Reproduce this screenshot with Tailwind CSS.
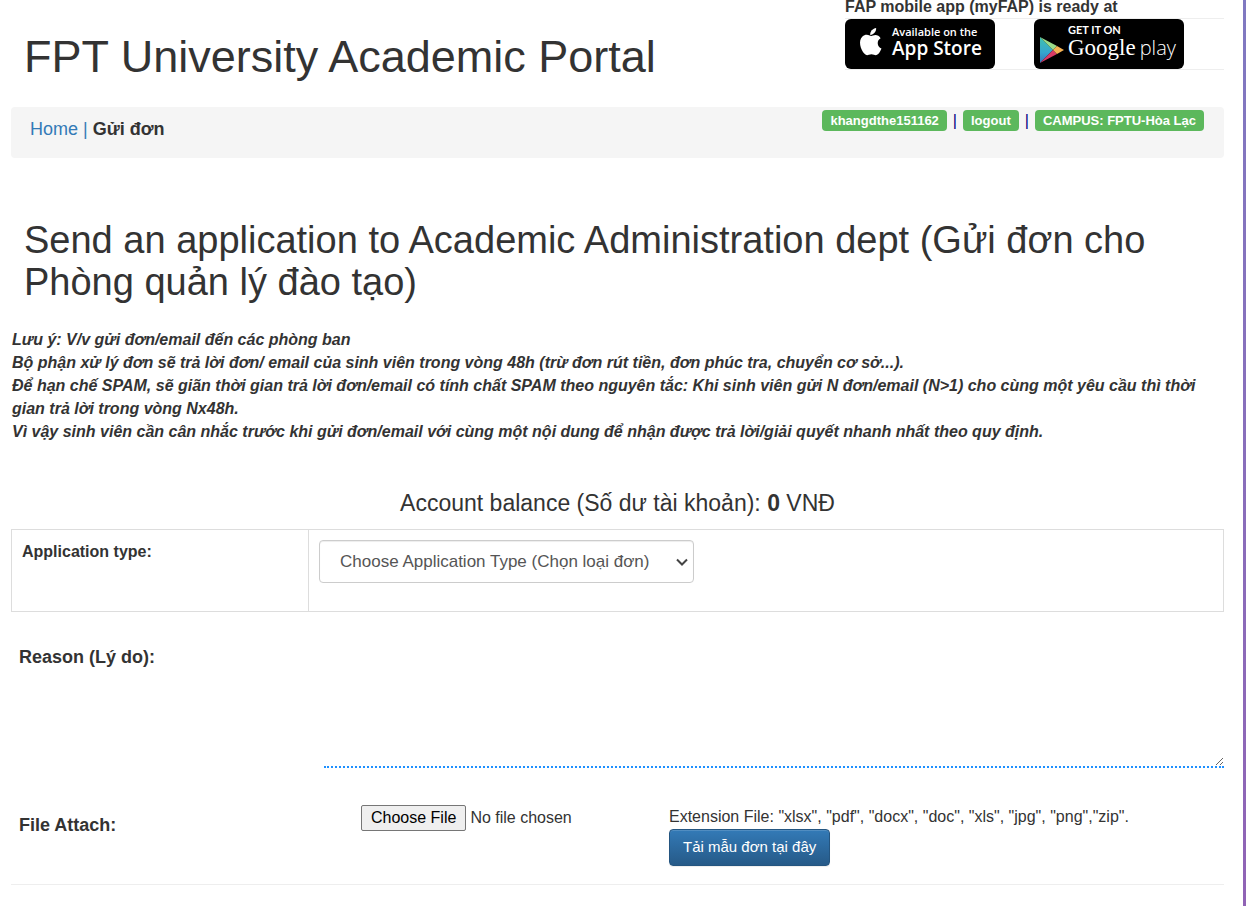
<!DOCTYPE html>
<html lang="vi">
<head>
<meta charset="utf-8">
<meta name="viewport" content="width=device-width, initial-scale=1">
<title>FPT University Academic Portal</title>
<script src="https://cdn.jsdelivr.net/npm/@tailwindcss/browser@4"></script>
</head>
<body class="flex min-h-screen overflow-x-hidden bg-white font-['Liberation_Sans',Arial,sans-serif] text-[16px] text-[#333]">
<div class="min-w-0 flex-1 pr-[19px] pl-[11px]">
  <header class="flex">
    <h1 class="min-w-0 flex-1 pt-8 pl-[13px] text-[45px] leading-[50px]">FPT University Academic Portal</h1>
    <div class="w-[379px] shrink-0">
      <p class="pb-1 leading-[14px] font-bold">FAP mobile app (myFAP) is ready at</p>
      <div class="grid grid-cols-[189px_1fr] border-y border-[#eee]">
        <a href="#" class="flex h-[50px] w-[150px] items-center gap-2 rounded-md bg-black pl-3 text-white">
          <svg class="mb-1 h-[30px] w-[27px] shrink-0" viewBox="0 0 27 32" fill="#fff" aria-hidden="true">
            <path d="M19.500 1c.2 2-.6 3.800-1.700 5.200-1.200 1.400-2.900 2.300-4.600 2.200-.2-1.900.7-3.700 1.700-4.900C16.100 2.100 18 1.100 19.500 1z"/>
            <path d="M24.300 12.100c-2 1.200-3.200 2.900-3.100 5.300 0 2.900 1.700 4.700 4 5.600-.8 2.300-2.100 4.400-3.500 5.900-1.300 1.300-2.800 1.500-4.500.7-1.900-.8-3.500-.8-5.400 0-1.900.9-3.300.5-4.700-1-4.500-4.900-6.900-14.200-2.200-18.500 2.300-2.100 5.200-2.200 7.700-1 1.300.6 2.200.6 3.500 0 3-1.200 6.200-.6 8.200 3z"/>
          </svg>
          <span class="flex flex-col pb-1 font-['Open_Sans',sans-serif] font-semibold">
            <span class="text-[11px] leading-3">Available on the</span>
            <span class="text-[19px] leading-5">App Store</span>
          </span>
        </a>
        <a href="#" class="flex h-[50px] w-[150px] items-center gap-1 rounded-md bg-black pl-1.5 text-white">
          <svg class="mt-3 h-[26px] w-6 shrink-0" viewBox="0 1 24 26" aria-hidden="true">
            <defs><linearGradient id="play" x1="0" y1="0" x2="0" y2="1"><stop stop-color="#3fc1ae"/><stop offset=".6" stop-color="#36a6cf"/><stop offset="1" stop-color="#3973b7"/></linearGradient></defs>
            <path fill="url(#play)" d="M0 1v26l13-13z"/>
            <path fill="#9bdc8a" d="M0 1l17 9-4 4z"/>
            <path fill="#d93a66" d="M0 27l17-9-4-4z"/>
            <path fill="#f6b253" d="M17 10l7 4-7 4-4-4z"/>
          </svg>
          <span class="flex flex-col pb-1">
            <span class="font-['Lato',sans-serif] text-[11px] leading-3 font-bold">GET IT ON</span>
            <span class="flex items-baseline gap-1 leading-6"><span class="font-['Liberation_Serif',serif] text-[23px]">Google</span><span class="font-['Open_Sans',sans-serif] text-[20px] font-light">play</span></span>
          </span>
        </a>
      </div>
    </div>
  </header>

  <nav class="mt-[25px] flex min-h-[51px] items-start justify-between rounded bg-[#f5f5f5] pr-5 pl-[19px]" aria-label="Breadcrumb">
    <div class="pt-2.5 text-[18px] leading-6"><a href="#" class="text-[#337ab7]">Home</a> <span class="text-[#337ab7]">|</span> <b>Gửi đơn</b></div>
    <div class="flex items-center gap-1.5 pt-[3px] text-[13px] leading-[21px] text-[#000080]">
      <a href="#" class="rounded bg-[#5cb85c] px-2 font-bold text-white">khangdthe151162</a>
      <span class="text-[16px]">|</span>
      <a href="#" class="rounded bg-[#5cb85c] px-2 font-bold text-white">logout</a>
      <span class="text-[16px]">|</span>
      <span class="rounded bg-[#5cb85c] px-2 font-bold text-white">CAMPUS: FPTU-Hòa Lạc</span>
    </div>
  </nav>

  <main>
    <h2 class="pt-[61px] pl-[13px] text-[38px] leading-[42px]">Send an application to Academic Administration dept (Gửi đơn cho Phòng quản lý đào tạo)</h2>
    <p class="pt-[25px] pl-px text-[16px] leading-[23px] font-bold italic">Lưu ý: V/v gửi đơn/email đến các phòng ban<br>Bộ phận xử lý đơn sẽ trả lời đơn/ email của sinh viên trong vòng 48h (trừ đơn rút tiền, đơn phúc tra, chuyển cơ sở...).<br>Để hạn chế SPAM, sẽ giãn thời gian trả lời đơn/email có tính chất SPAM theo nguyên tắc: Khi sinh viên gửi N đơn/email (N&gt;1) cho cùng một yêu cầu thì thời gian trả lời trong vòng Nx48h.<br>Vì vậy sinh viên cần cân nhắc trước khi gửi đơn/email với cùng một nội dung để nhận được trả lời/giải quyết nhanh nhất theo quy định.</p>
    <p class="pt-[46px] pb-3 text-center text-[23px] leading-7">Account balance (Số dư tài khoản): <b>0</b> VNĐ</p>

    <form>
      <table class="w-full border-collapse">
        <tr class="h-[82px] align-top">
          <th class="w-[297px] border border-[#ddd] px-2.5 py-2.5 text-left leading-6"><label for="type">Application type:</label></th>
          <td class="border border-[#ddd] p-2.5">
            <div class="relative w-[375px]">
              <select id="type" class="h-[43px] w-full appearance-none rounded border border-[#ccc] bg-white pr-8 pl-5 text-[17px] text-[#555] shadow-[inset_0_1px_1px_rgba(0,0,0,0.075)]">
                <option>Choose Application Type (Chọn loại đơn)</option>
              </select>
              <svg class="pointer-events-none absolute top-[18px] right-1.5 h-2 w-3" viewBox="0 0 12 8" fill="none" stroke="#444" stroke-width="2" aria-hidden="true"><path d="M1 1.500l5 5 5-5"/></svg>
            </div>
          </td>
        </tr>
      </table>
      <div class="flex pt-[33px] pl-2">
        <label for="reason" class="w-[305px] shrink-0 text-[18px] leading-6 font-bold">Reason (Lý do):</label>
        <textarea id="reason" class="h-[123px] min-w-0 flex-1 resize border-b-2 border-dotted border-[#1e90ff] bg-transparent"></textarea>
      </div>
      <div class="flex items-start border-b border-[#eee] pt-[37px] pb-[18px] pl-2">
        <label for="file" class="w-[342px] shrink-0 pt-2 text-[18px] leading-6 font-bold">File Attach:</label>
        <input id="file" type="file" class="w-[308px] text-[16px] file:h-[26px] file:rounded-xs file:border file:border-solid file:border-[#767676] file:bg-[#efefef] file:px-[9px] file:text-black">
        <div class="min-w-0 flex-1">
          <p class="leading-6">Extension File: "xlsx", "pdf", "docx", "doc", "xls", "jpg", "png","zip".</p>
          <button type="button" class="h-[37px] rounded border border-[#245580] bg-linear-to-b from-[#337ab7] to-[#265a88] px-[13px] text-[15px] text-white shadow-[inset_0_1px_0_rgba(255,255,255,0.15),0_1px_1px_rgba(0,0,0,0.075)]">Tải mẫu đơn tại đây</button>
        </div>
      </div>
    </form>
  </main>
</div>
<div class="w-[3px] shrink-0 bg-linear-to-b from-[#8079c1] to-[#9063b5]"></div>
</body>
</html>
